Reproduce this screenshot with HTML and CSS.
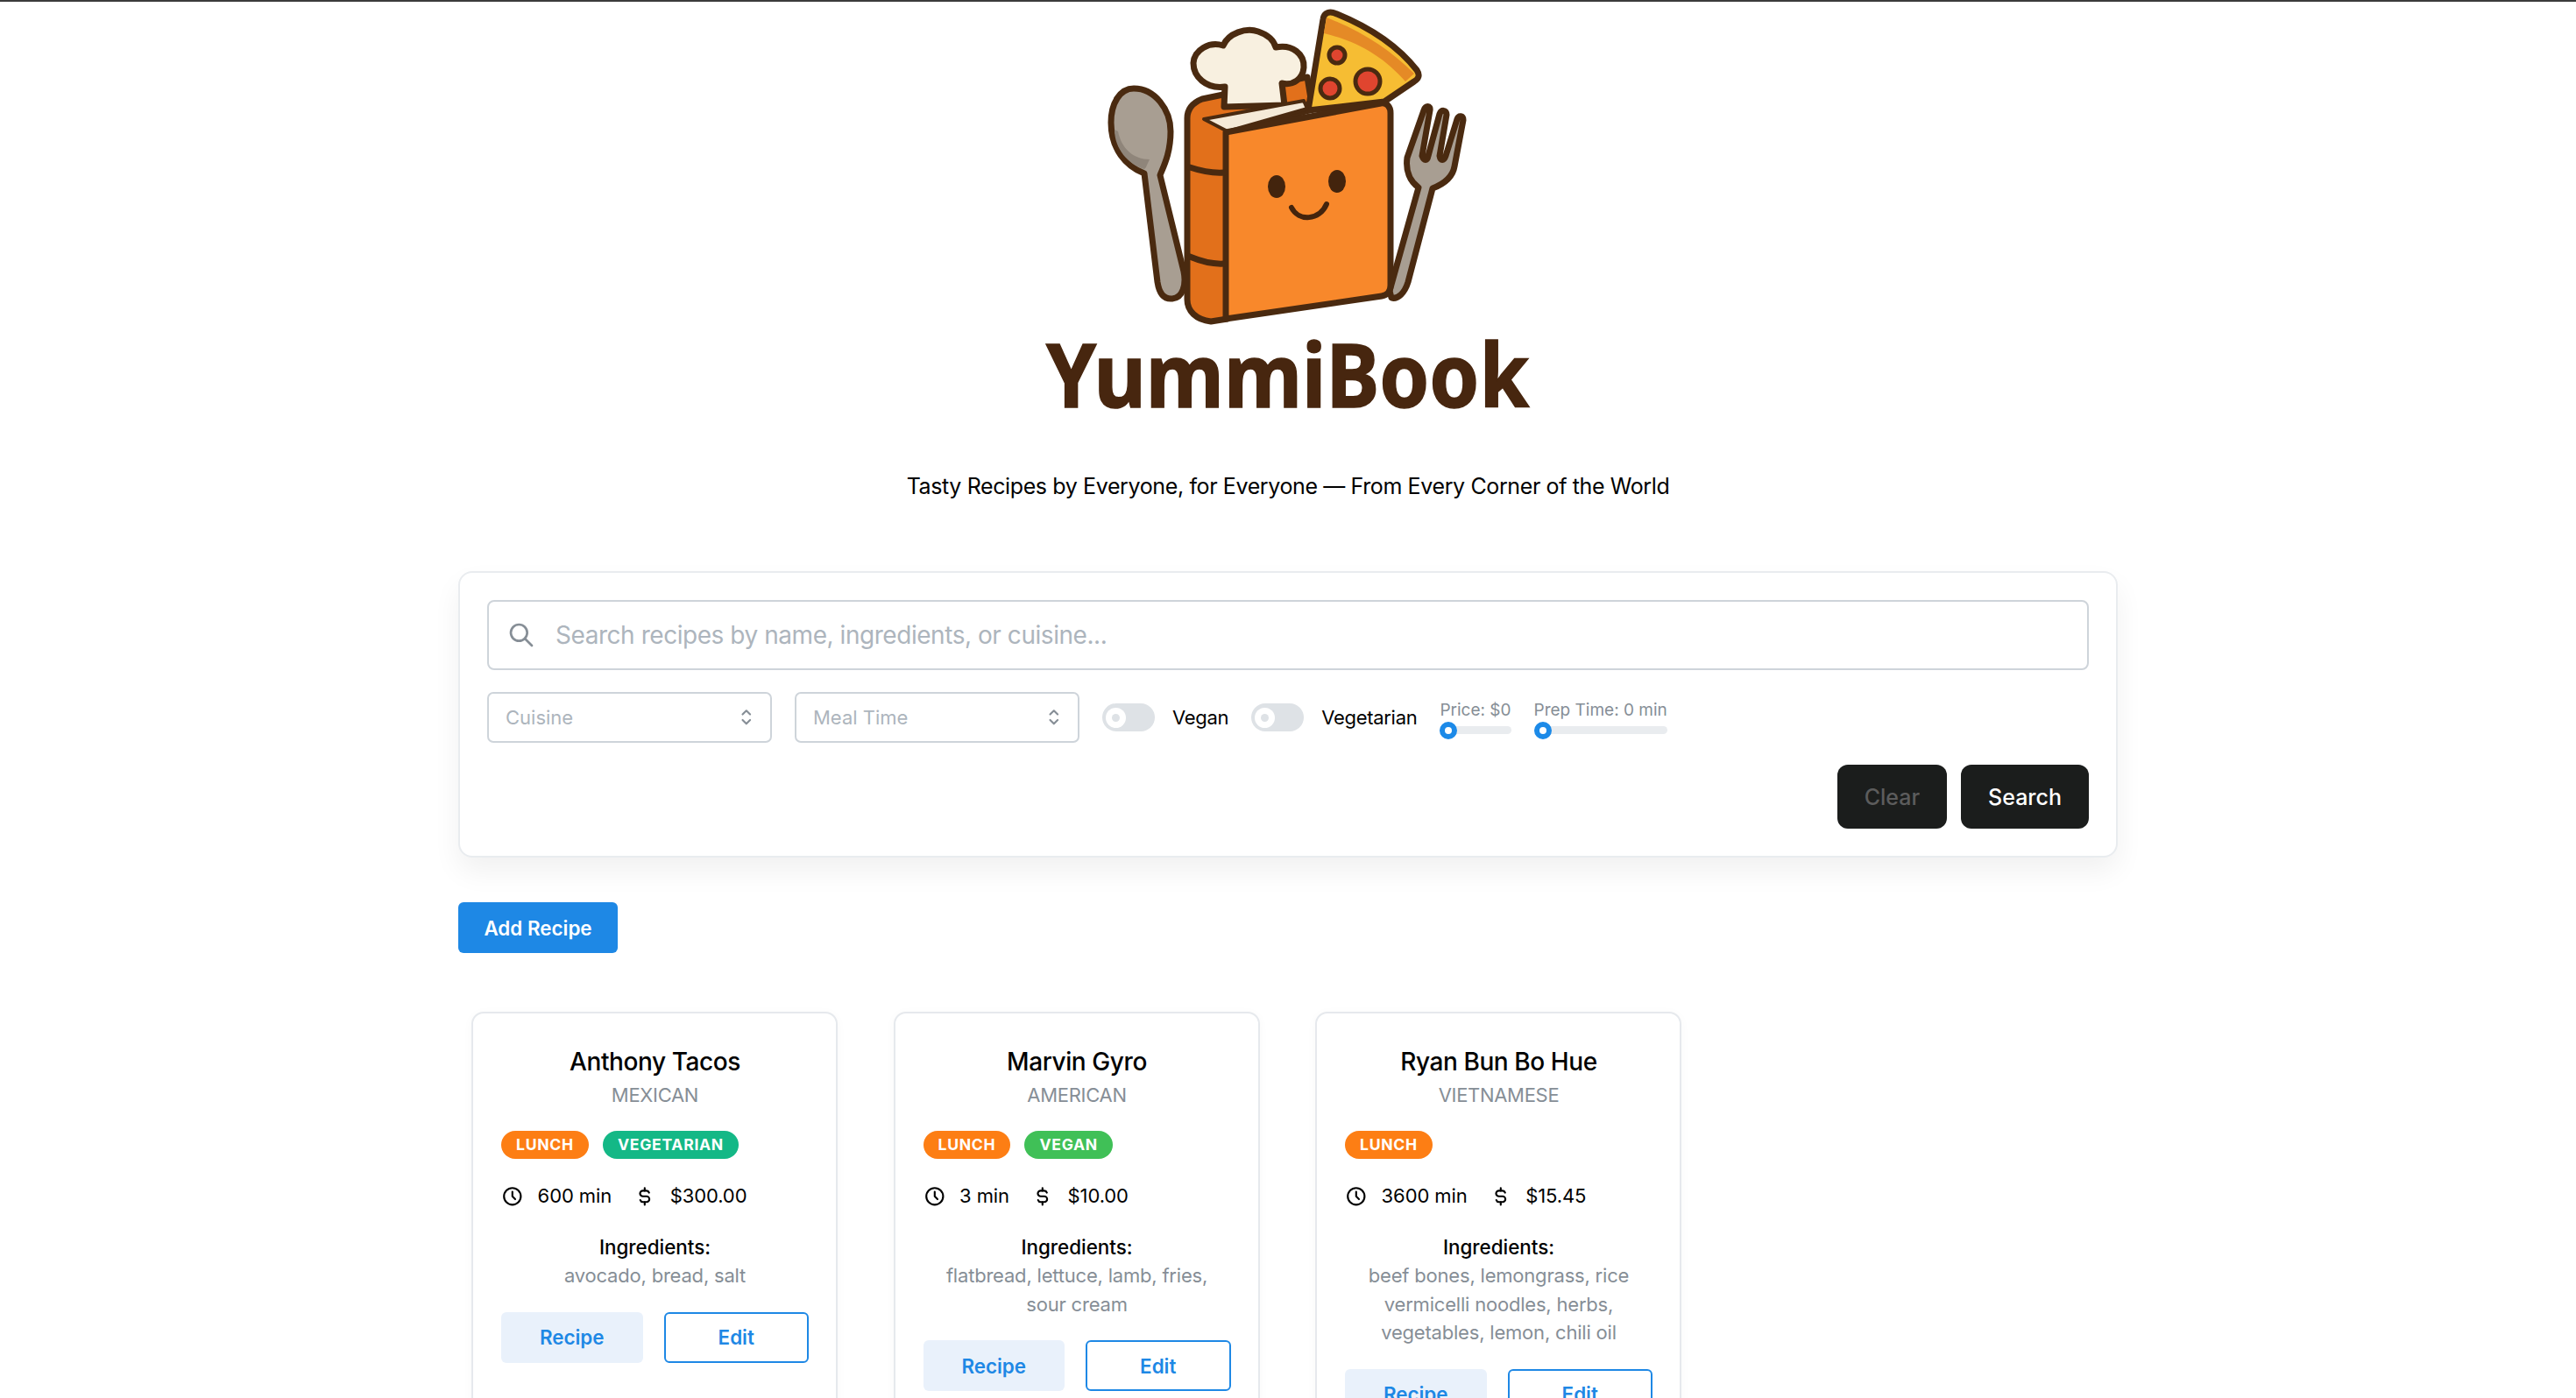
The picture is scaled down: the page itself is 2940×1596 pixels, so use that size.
FILE: index.html
```html
<!DOCTYPE html>
<html>
  <head>
    <meta charset="utf-8">
    <title>YummiBook</title>
    <link rel="stylesheet" href="styles.css">
  </head>
  <body>
    <header class="site-header">
      <svg class="logo" viewBox="0 2 620 500" width="620" height="500">
        <g stroke="#4a2a10" stroke-width="7" stroke-linejoin="round" stroke-linecap="round">
          <!-- spoon -->
          <path fill="#a89e92" d="M134,101 C158,101 176,125 176,150 C176,175 168,190 164,200 L191,310 C194,325 190,340 178,341 C168,342 163,335 161,322 L146,198 C125,190 108,170 108,140 C108,118 118,101 134,101 Z"/>
          <path fill="#8f857a" stroke="none" d="M116,150 C120,170 134,182 152,182 C148,190 148,192 146,193 C128,188 112,170 112,148 Z"/>
          <!-- fork -->
          <path fill="#a89e92" d="M426,332 L459,214 C449,207 444,195 446,180 L465,126 C467,120 473,120 472,126 L463,178 C465,184 469,184 470,178 L483,130 C485,125 491,125 491,131 L483,178 C484,184 488,184 490,178 L503,136 C505,131 510,132 510,137 L500,190 C498,202 488,210 475,215 L447,322 C443,335 435,342 428,340 Z"/>
          <!-- spine and back cover -->
          <path fill="#e2701b" d="M195,135 C195,124 202,117 212,113 L332,88 L338,125 L241,152 L241,364 L222,367 C205,365 195,355 195,342 Z"/>
          <!-- hat -->
          <path fill="#f8f0e0" d="M237,122 L238,99 C216,102 202,87 202,72 C203,57 220,47 236,52 C242,38 262,31 276,36 C288,40 294,47 296,54 C315,50 329,62 328,77 C327,90 316,98 303,95 L306,120 Z"/>
          <!-- pizza -->
          <path fill="#f6bd33" d="M333,126 L350,22 C351,14 358,12 366,16 C405,32 435,52 457,80 C461,86 459,90 454,93 L420,116 Z"/>
          <path fill="#e58a26" stroke="none" d="M354,20 C395,36 428,58 454,84 L444,93 C420,66 392,48 351,38 Z"/>
          <circle fill="#e0452f" stroke-width="5" cx="366" cy="63" r="9"/>
          <circle fill="#e0452f" stroke-width="5" cx="401" cy="93" r="14"/>
          <circle fill="#e0452f" stroke-width="5" cx="358" cy="101" r="11"/>
          <!-- pages -->
          <path fill="#f5ead8" stroke-width="4" d="M214,136 L328,115 L332,124 L241,150 Z"/>
          <!-- front cover -->
          <path fill="#f8882b" d="M239,151 L416,118 C423,117 427,122 427,129 L427,326 C427,333 423,337 417,338 L239,364 Z"/>
          <path fill="none" d="M198,191 C210,195 222,198 237,197 M198,293 C210,298 222,302 237,301"/>
        </g>
        <ellipse fill="#43240d" cx="297" cy="213" rx="10" ry="13"/>
        <ellipse fill="#43240d" cx="366" cy="207" rx="10" ry="13"/>
        <path fill="none" stroke="#43240d" stroke-width="6" stroke-linecap="round" d="M314,237 C322,253 346,252 354,233"/>
        <text class="logo-word" transform="translate(34 465) scale(.914 1)">YummiBook</text>
      </svg>
      <p class="tagline">Tasty Recipes by Everyone, for Everyone — From Every Corner of the World</p>
    </header>

    <main class="content">
      <section class="filters">
        <div class="search-box">
          <svg class="icon search-icon" viewBox="0 0 24 24"><path d="M3 10a7 7 0 1 0 14 0a7 7 0 1 0 -14 0"/><path d="M21 21l-6 -6"/></svg>
          <input class="search-input" type="text" placeholder="Search recipes by name, ingredients, or cuisine...">
        </div>
        <div class="filter-row">
          <div class="select-box">
            <input class="select-input" type="text" placeholder="Cuisine" readonly>
            <svg class="icon chevrons" viewBox="0 0 24 24"><path d="M8 9l4 -4l4 4"/><path d="M16 15l-4 4l-4 -4"/></svg>
          </div>
          <div class="select-box">
            <input class="select-input" type="text" placeholder="Meal Time" readonly>
            <svg class="icon chevrons" viewBox="0 0 24 24"><path d="M8 9l4 -4l4 4"/><path d="M16 15l-4 4l-4 -4"/></svg>
          </div>
          <label class="switch-field">
            <span class="switch"><span class="switch-thumb"><span class="switch-dot"></span></span></span>
            <span>Vegan</span>
          </label>
          <label class="switch-field">
            <span class="switch"><span class="switch-thumb"><span class="switch-dot"></span></span></span>
            <span>Vegetarian</span>
          </label>
          <div class="slider-field">
            <div class="slider-label">Price: $0</div>
            <div class="slider-track"><span class="slider-thumb"></span></div>
          </div>
          <div class="slider-field">
            <div class="slider-label">Prep Time: 0 min</div>
            <div class="slider-track"><span class="slider-thumb"></span></div>
          </div>
        </div>
        <div class="filter-actions">
          <button class="btn-dark btn-muted">Clear</button>
          <button class="btn-dark">Search</button>
        </div>
      </section>

      <button class="btn-add">Add Recipe</button>

      <section class="recipes">
        <article class="card">
          <h3 class="card-title">Anthony Tacos</h3>
          <div class="card-cuisine">MEXICAN</div>
          <div class="badges"><span class="badge badge-lunch">Lunch</span><span class="badge badge-vegetarian">Vegetarian</span></div>
          <div class="meta">
            <svg class="icon" viewBox="0 0 24 24"><path d="M3 12a9 9 0 1 0 18 0a9 9 0 0 0 -18 0"/><path d="M12 7v5l3 3"/></svg>
            <span>600 min</span>
            <svg class="icon meta-dollar" viewBox="0 0 24 24"><path d="M16.7 8a3 3 0 0 0 -2.7 -2h-4a3 3 0 0 0 0 6h4a3 3 0 0 1 0 6h-4a3 3 0 0 1 -2.7 -2"/><path d="M12 3v3m0 12v3"/></svg>
            <span>$300.00</span>
          </div>
          <div class="ingredients-title">Ingredients:</div>
          <p class="ingredients">avocado, bread, salt</p>
          <div class="card-actions"><button class="btn-light">Recipe</button><button class="btn-outline">Edit</button></div>
        </article>

        <article class="card">
          <h3 class="card-title">Marvin Gyro</h3>
          <div class="card-cuisine">AMERICAN</div>
          <div class="badges"><span class="badge badge-lunch">Lunch</span><span class="badge badge-vegan">Vegan</span></div>
          <div class="meta">
            <svg class="icon" viewBox="0 0 24 24"><path d="M3 12a9 9 0 1 0 18 0a9 9 0 0 0 -18 0"/><path d="M12 7v5l3 3"/></svg>
            <span>3 min</span>
            <svg class="icon meta-dollar" viewBox="0 0 24 24"><path d="M16.7 8a3 3 0 0 0 -2.7 -2h-4a3 3 0 0 0 0 6h4a3 3 0 0 1 0 6h-4a3 3 0 0 1 -2.7 -2"/><path d="M12 3v3m0 12v3"/></svg>
            <span>$10.00</span>
          </div>
          <div class="ingredients-title">Ingredients:</div>
          <p class="ingredients">flatbread, lettuce, lamb, fries, sour cream</p>
          <div class="card-actions"><button class="btn-light">Recipe</button><button class="btn-outline">Edit</button></div>
        </article>

        <article class="card">
          <h3 class="card-title">Ryan Bun Bo Hue</h3>
          <div class="card-cuisine">VIETNAMESE</div>
          <div class="badges"><span class="badge badge-lunch">Lunch</span></div>
          <div class="meta">
            <svg class="icon" viewBox="0 0 24 24"><path d="M3 12a9 9 0 1 0 18 0a9 9 0 0 0 -18 0"/><path d="M12 7v5l3 3"/></svg>
            <span>3600 min</span>
            <svg class="icon meta-dollar" viewBox="0 0 24 24"><path d="M16.7 8a3 3 0 0 0 -2.7 -2h-4a3 3 0 0 0 0 6h4a3 3 0 0 1 0 6h-4a3 3 0 0 1 -2.7 -2"/><path d="M12 3v3m0 12v3"/></svg>
            <span>$15.45</span>
          </div>
          <div class="ingredients-title">Ingredients:</div>
          <p class="ingredients">beef bones, lemongrass, rice vermicelli noodles, herbs, vegetables, lemon, chili oil</p>
          <div class="card-actions"><button class="btn-light">Recipe</button><button class="btn-outline">Edit</button></div>
        </article>
      </section>
    </main>
  </body>
</html>
```

FILE: styles.css
```css
html{overflow:hidden; height:100%;}

body{margin:0; height:100%; overflow:hidden; border-top:2px solid #3c3c3c; background:#fff; color:#000; font-family:Inter, "Liberation Sans", sans-serif; font-size:25px;}

.site-header{text-align:center;}

.logo{display:block; margin:0 auto;}

.logo-word{font-family:"Noto Sans", sans-serif; font-weight:700; font-size:100px; fill:#47260f; stroke:#47260f; stroke-width:1.5px;}

.tagline{margin:33px 0 0; line-height:40px; letter-spacing:-.38px;}

.content{width:1894px; margin:77px auto 0;}

/* search panel */
.filters{box-sizing:border-box; padding:31px; border:2px solid #e9ecef; border-radius:16px; background:#fff; box-shadow:0 16px 32px rgba(0,0,0,.06);}

.search-box{box-sizing:border-box; display:flex; align-items:center; height:80px; padding-left:21px; border:2px solid #ced4da; border-radius:8px;}

.icon{flex:none; width:25.6px; height:25.6px; fill:none; stroke:currentColor; stroke-width:2; stroke-linecap:round; stroke-linejoin:round;}

.search-icon{width:32px; height:32px; margin-right:23px; color:#868e96;}

.search-input{flex:1; min-width:0; border:0; outline:0; padding:0; font-family:inherit; font-size:28px; letter-spacing:-.45px; background:none;}

.search-input::placeholder, .select-input::placeholder{color:#adb5bd; opacity:1;}

.filter-row{display:flex; align-items:center; gap:26px; margin-top:25px; height:58px;}

.select-box{box-sizing:border-box; display:flex; align-items:center; width:325px; height:58px; padding:0 14px 0 19px; border:2px solid #ced4da; border-radius:7px;}

.select-input{flex:1; min-width:0; border:0; outline:0; padding:0; font-family:inherit; font-size:22px; background:none;}

.chevrons{color:#868e96;}

.switch-field{display:flex; align-items:center; gap:20px; font-size:22px; letter-spacing:-.3px;}

.switch{box-sizing:border-box; display:flex; align-items:center; width:60px; height:32px; padding-left:4px; border-radius:16px; background:#dee2e6;}

.switch-thumb{display:flex; align-items:center; justify-content:center; width:23px; height:23px; border-radius:50%; background:#fff;}

.switch-dot{width:9px; height:9px; border-radius:50%; background:#dee2e6;}

.slider-label{font-size:19px; line-height:22px; color:#868e96;}

.slider-track{display:flex; align-items:center; height:9px; margin-top:7px; border-radius:5px; background:#e9ecef;}

.slider-thumb{box-sizing:border-box; flex:none; width:20px; height:20px; border:6px solid #1c8ae8; border-radius:50%; background:#fff;}

.filter-actions{display:flex; justify-content:flex-end; gap:16px; margin-top:25px;}

.btn-dark{height:73px; padding:0 31px; border:0; border-radius:12px; background:#1b1d1c; color:#fff; font-family:inherit; font-size:25px; font-weight:500;}

.btn-muted{color:#5c5c5c;}

.btn-add{display:block; width:182px; height:58px; margin-top:51px; padding:0; border:0; border-radius:6px; background:#1e88e5; color:#fff; font-family:inherit; font-size:22.4px; font-weight:600;}

/* recipe cards */
.recipes{display:flex; gap:63.5px; margin-top:67px; padding-left:15px;}

.card{box-sizing:border-box; width:418px; padding:32px 31px 32px 32px; border:2px solid #e6e9ed; border-radius:14px; background:#fff; box-shadow:0 2px 12px rgba(0,0,0,.03); text-align:center;}

.card-title{margin:0; font-size:28px; font-weight:500; line-height:46px; letter-spacing:-.42px;}

.card-cuisine{margin-top:-2px; font-size:22px; line-height:34px; letter-spacing:-.3px; color:#868e96;}

.badges{display:flex; gap:16px; margin-top:24px;}

.badge{box-sizing:border-box; height:32px; padding:0 17px; border-radius:16px; color:#fff; font-size:17.6px; font-weight:700; line-height:32px; letter-spacing:.7px; text-transform:uppercase;}

.badge-lunch{background:#fd7e14;}

.badge-vegetarian{background:#14b886;}

.badge-vegan{background:#40c057;}

.meta{display:flex; align-items:center; gap:16px; margin-top:25px; font-size:22px; line-height:35px; letter-spacing:-.1px;}

.meta-dollar{margin-left:9px;}

.ingredients-title{margin-top:23px; font-size:22.4px; font-weight:500; line-height:35px;}

.ingredients{margin:-1px 0 0; padding:0 4px; font-size:22px; line-height:32.5px; letter-spacing:-.2px; color:#868e96;}

.card-actions{display:flex; gap:24px; margin-top:25px;}

.btn-light, .btn-outline{box-sizing:border-box; flex:1; height:58px; padding:0; border-radius:6px; font-family:inherit; font-size:22.4px; font-weight:600; color:#1e88e5;}

.btn-light{border:0; background:#e9f1fb;}

.btn-outline{border:2px solid #1e88e5; background:#fff;}
```
